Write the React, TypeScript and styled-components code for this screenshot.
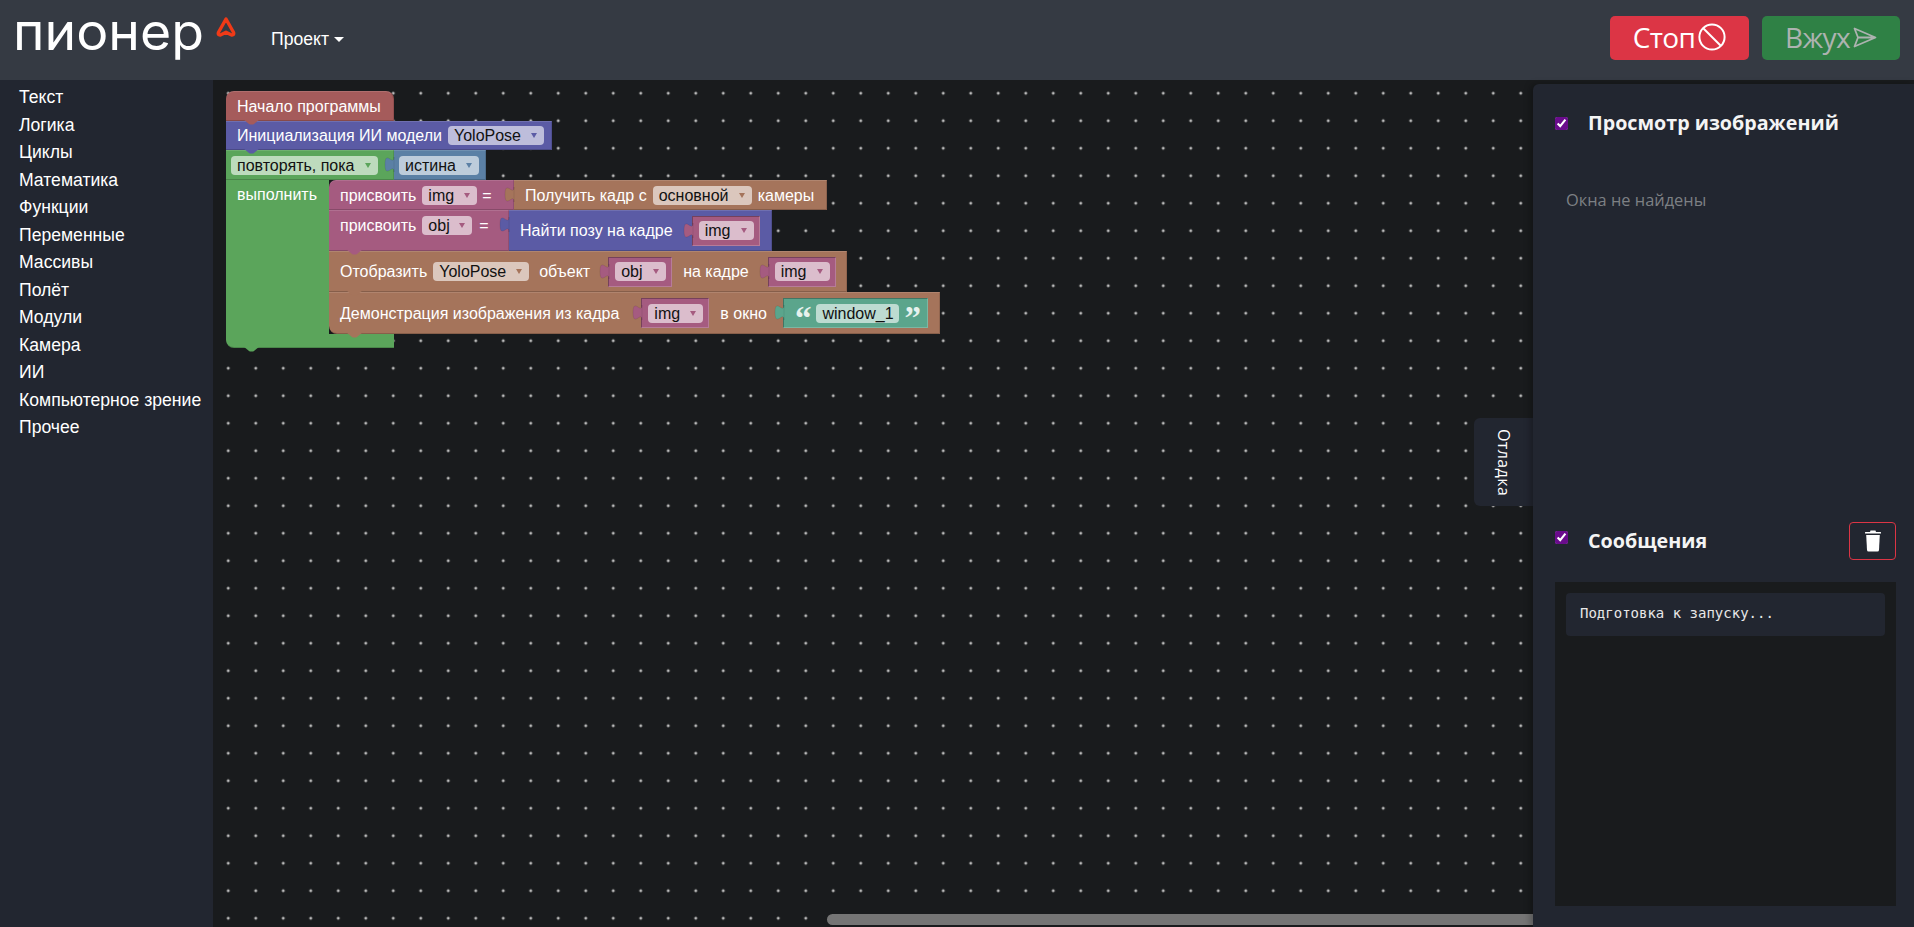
import React from "react";
import styled, { createGlobalStyle } from "styled-components";

const Global = createGlobalStyle`
  html, body { margin: 0; height: 100%; overflow: hidden; background: #191b1d; }
  #root { height: 100%; }
  * { box-sizing: border-box; }
`;

const C = {
  red: "#a55b5b",
  indigo: "#5b5ba5",
  green: "#5ba55b",
  blue: "#5b80a5",
  pink: "#a55b80",
  brown: "#a5745b",
  teal: "#5ba58c",
};
const FIELD: Record<string, string> = {
  indigo: "#bdbddb",
  green: "#bddbbd",
  blue: "#bdccdb",
  pink: "#dbbdcc",
  brown: "#dbc7bd",
  teal: "#bddbd1",
};
type Hue = keyof typeof C;

const Page = styled.div`
  height: 100%;
  display: flex;
  flex-direction: column;
`;
const Navbar = styled.header`
  flex: 0 0 80px;
  background: #353a43;
  display: flex;
  align-items: flex-start;
  padding: 16px 14px 0 16px;
`;
const LogoWrap = styled.div`
  display: flex;
  width: 255px;
  flex: none;
`;
const LogoText = styled.span`
  font: 400 51px/1 "Inter", sans-serif;
  color: #fff;
  margin: -10px 0 0 -3px;
  height: 51px;
  transform: scaleX(1.05);
  transform-origin: left center;
`;
const LogoMark = styled.svg`
  margin: 0 0 0 21px;
`;
const NavMenu = styled.button`
  border: 0;
  background: none;
  padding: 0;
  margin: 14px 0 0 0;
  color: #fff;
  font: 17.6px/18px "Liberation Sans", sans-serif;
  display: flex;
  align-items: center;
  gap: 5px;
`;
const Caret = styled.i`
  width: 0;
  height: 0;
  border: 5px solid transparent;
  border-top-color: #fff;
  border-bottom: 0;
`;
const NavActions = styled.div`
  margin-left: auto;
  display: flex;
  gap: 13px;
`;
const ActionButton = styled.button<{ $tone: "stop" | "go" }>`
  width: ${(p) => (p.$tone === "stop" ? 139 : 138)}px;
  height: 44px;
  border: 0;
  border-radius: 5px;
  background: ${(p) => (p.$tone === "stop" ? "#dc3545" : "#2f8145")};
  color: ${(p) => (p.$tone === "stop" ? "#fff" : "#adb3b0")};
  font: 28px/1 "Open Sans", sans-serif;
  letter-spacing: -0.6px;
  display: flex;
  align-items: center;
  justify-content: center;
  gap: 3px;
  padding: 0 0 2px;
`;
const Main = styled.main`
  flex: 1;
  min-height: 0;
  display: flex;
`;
const Sidebar = styled.ul`
  flex: 0 0 214px;
  margin: 0;
  padding: 4px 0 0 19px;
  list-style: none;
  background: #222630;
  border-right: 1px solid #191b1d;
`;
const SideItem = styled.li`
  font: 17.6px/27.5px "Liberation Sans", sans-serif;
  color: #fff;
`;
const Workspace = styled.section`
  flex: 1;
  position: relative;
  overflow: hidden;
  background-color: #191b1d;
  background-image: radial-gradient(circle, #c4c4c4 0, #b8b8b8 1.1px, transparent 1.8px);
  background-size: 27.5px 27.5px;
  background-position: 0.5px -0.5px;
`;
const Scroll = styled.div`
  position: absolute;
  left: 613px;
  right: 0;
  bottom: 2px;
  height: 11px;
  background: #757575;
  border-radius: 6px 0 0 6px;
`;
const DebugTab = styled.div`
  position: absolute;
  right: 0;
  top: 338px;
  width: 59px;
  height: 88px;
  padding-top: 2px;
  background: #222630;
  border-radius: 6px 0 0 6px;
  display: flex;
  align-items: center;
  justify-content: center;
  writing-mode: vertical-rl;
  color: #fff;
  font: 16px "Open Sans", sans-serif;
  letter-spacing: 0.4px;
`;

/* Blockly program */
const Program = styled.div`
  position: absolute;
  left: 12px;
  top: 11px;
  display: flex;
  flex-direction: column;
  align-items: flex-start;
  font: 16px/19px "Liberation Sans", sans-serif;
  color: #fff;
`;
const Stmt = styled.div<{ $hue: Hue; $h?: number; $w?: number; $pl?: number; $hat?: boolean; $corner?: "top" | "bottom"; $high?: boolean }>`
  position: relative;
  display: flex;
  align-items: ${(p) => (p.$high ? "flex-start" : "center")};
  height: ${(p) => p.$h ?? 30}px;
  ${(p) => (p.$w ? `width: ${p.$w}px;` : "")}
  padding: ${(p) => (p.$high ? 5 : 0)}px 0 0 ${(p) => p.$pl ?? 11}px;
  background: ${(p) => C[p.$hue]};
  border-top: 1px solid rgba(255, 255, 255, 0.12);
  border-right: 1px solid rgba(0, 0, 0, 0.12);
  border-bottom: 1px solid rgba(0, 0, 0, 0.18);
  ${(p) => (p.$hat ? "border-radius: 8px 8px 0 0;" : "")}
  ${(p) => (p.$corner === "top" ? "border-radius: 7px 0 0 0;" : "")}
  ${(p) => (p.$corner === "bottom" ? "border-radius: 0 0 0 8px;" : "")}
`;
const ValueRow = styled.div`
  display: flex;
  align-items: flex-start;
`;
const Value = styled.div<{ $hue: Hue; $h?: number; $w?: number; $pl?: number }>`
  position: relative;
  flex: none;
  display: flex;
  align-items: center;
  height: ${(p) => p.$h ?? 30}px;
  ${(p) => (p.$w ? `width: ${p.$w}px;` : "")}
  padding: 0 0 0 ${(p) => p.$pl ?? 6}px;
  background: ${(p) => C[p.$hue]};
  border-top: 1px solid rgba(255, 255, 255, 0.12);
  border-right: 1px solid rgba(0, 0, 0, 0.14);
  border-bottom: 1px solid rgba(0, 0, 0, 0.18);
`;
const Inline = styled(Value)<{ $l?: number }>`
  margin-left: ${(p) => p.$l ?? 0}px;
  border: 1px solid rgba(0, 0, 0, 0.28);
  border-right-color: rgba(255, 255, 255, 0.2);
  border-bottom-color: rgba(255, 255, 255, 0.2);
`;
const TabSvg = styled.svg`
  position: absolute;
  left: -9px;
  top: 6px;
  overflow: visible;
`;
const NotchSvg = styled.svg`
  position: absolute;
  left: 17px;
  top: 100%;
  z-index: 3;
  overflow: visible;
`;
const Label = styled.span<{ $l?: number }>`
  flex: none;
  white-space: pre;
  margin-left: ${(p) => p.$l ?? 0}px;
`;
const Field = styled.span<{ $hue: string; $w: number; $l?: number }>`
  flex: none;
  width: ${(p) => p.$w}px;
  height: 19px;
  margin-left: ${(p) => p.$l ?? 0}px;
  padding: 0 7px 0 6px;
  border-radius: 4px;
  background: ${(p) => FIELD[p.$hue]};
  color: #111;
  display: flex;
  align-items: center;
  justify-content: space-between;
`;
const Arrow = styled.i<{ $hue: Hue }>`
  width: 0;
  height: 0;
  border: 3.5px solid transparent;
  border-top: 5px solid ${(p) => C[p.$hue]};
  border-bottom: 0;
`;
const Quote = styled.span<{ $l: number; $r: number }>`
  font: bold 33px/1 "Liberation Serif", serif;
  height: 19px;
  margin-top: -3px;
  margin-left: ${(p) => p.$l}px;
  margin-right: ${(p) => p.$r}px;
  color: #e6f2ee;
`;
const StringBlock = styled(Inline)`
  padding-left: 0;
`;
const Loop = styled.div`
  display: flex;
  flex-direction: column;
  align-items: flex-start;
`;
const LoopBody = styled.div`
  display: flex;
  align-items: stretch;
`;
const LoopSide = styled.div`
  width: 103px;
  flex: none;
  background: ${C.green};
  padding: 5px 0 0 11px;
`;
const InnerStack = styled.div`
  display: flex;
  flex-direction: column;
  align-items: flex-start;
  position: relative;
  background: linear-gradient(to right, #15171a 0, #15171a 12px, transparent 12px) bottom left / 100% 10px no-repeat;
`;
const LoopFoot = styled.div`
  position: relative;
  width: 168px;
  height: 14px;
  background: ${C.green};
  border-radius: 0 0 0 8px;
  border-bottom: 1px solid rgba(0, 0, 0, 0.18);
`;

const Tab = ({ hue }: { hue: Hue }) => (
  <TabSvg width="9" height="15" viewBox="0 0 8 15" preserveAspectRatio="none">
    <path d="M8,0 c0,10 -8,-8 -8,7.5 s8,-2.5 8,7.5 Z" fill={C[hue]} stroke="rgba(0,0,0,.15)" strokeWidth="0.5" />
  </TabSvg>
);
const Notch = ({ hue }: { hue: Hue }) => (
  <NotchSvg width="17" height="5" viewBox="0 0 17 5">
    <path d="M0,-1 L6,4 Q6.8,4.6 8,4.6 H9 Q10.2,4.6 11,4 L17,-1 Z" fill={C[hue]} />
  </NotchSvg>
);
const Drop = ({ hue, w, l, children }: { hue: Hue; w: number; l?: number; children: React.ReactNode }) => (
  <Field $hue={hue} $w={w} $l={l}>
    <span>{children}</span>
    <Arrow $hue={hue} />
  </Field>
);
const ImgVar = ({ w, l, children }: { w: number; l: number; children: string }) => (
  <Inline $hue="pink" $w={w} $l={l}>
    <Tab hue="pink" />
    <Drop hue="pink" w={w - 13}>{children}</Drop>
  </Inline>
);

const Panel = styled.aside`
  flex: 0 0 381px;
  margin-top: 4px;
  position: relative;
  background: #222630;
  border-top-left-radius: 6px;
  box-shadow: -3px 0 6px rgba(0, 0, 0, 0.25);
  display: flex;
  flex-direction: column;
  color: #f4f4f4;
`;
const Viewer = styled.div`
  flex: 1;
  padding: 20px 18px 0 22px;
`;
const PanelHead = styled.div`
  display: flex;
  align-items: center;
  height: 38px;
`;
const Check = styled.input<{ $lift?: number }>`
  width: 13px;
  height: 13px;
  margin: 0 20px ${(p) => p.$lift ?? 0}px 0;
  accent-color: #6a0c8c;
  flex: none;
`;
const Title = styled.h2`
  margin: 0;
  font: 700 19.7px/38px "Open Sans", sans-serif;
  color: #f4f4f4;
`;
const Empty = styled.p`
  margin: 48px 0 0 11px;
  font: 16.4px/20px "Open Sans", sans-serif;
  color: #7d8084;
`;
const LogSection = styled.div`
  flex: 0 0 405px;
  padding: 0 18px 21px 22px;
  display: flex;
  flex-direction: column;
`;
const TrashBtn = styled.button`
  margin-left: auto;
  width: 47px;
  height: 38px;
  border: 1px solid #dc3545;
  border-radius: 4px;
  background: none;
  padding: 0;
  display: flex;
  align-items: center;
  justify-content: center;
`;
const Console = styled.div`
  flex: 1;
  margin-top: 22px;
  padding: 11px;
  background: #191b1d;
`;
const LogLine = styled.div`
  height: 43px;
  padding: 0 14px;
  border-radius: 4px;
  background: #222630;
  color: #e8e8e8;
  font: 14px/40px "DejaVu Sans Mono", monospace;
`;

const categories = ["Текст","Логика","Циклы","Математика","Функции","Переменные","Массивы","Полёт","Модули","Камера","ИИ","Компьютерное зрение","Прочее"];

export default function App() {
  return (
    <Page>
      <Global />
      <Navbar>
        <LogoWrap>
          <LogoText>пионер</LogoText>
          <LogoMark width="20" height="22" viewBox="0 0 20 22">
            <path d="M10 3 L17.6 16.5 Q18.4 19.3 15.6 19 L10 16.2 L4.4 19 Q1.6 19.3 2.4 16.5 Z" fill="none" stroke="#f03a17" strokeWidth="3.4" strokeLinejoin="round" />
          </LogoMark>
        </LogoWrap>
        <NavMenu>Проект<Caret /></NavMenu>
        <NavActions>
          <ActionButton $tone="stop">
            Стоп
            <svg width="28" height="28" viewBox="0 0 28 28" fill="none" stroke="#fff" strokeWidth="2">
              <circle cx="14" cy="14" r="12.6" />
              <path d="M5 5 L23 23" />
            </svg>
          </ActionButton>
          <ActionButton $tone="go">
            Вжух
            <svg width="24" height="21" viewBox="0 0 24 21" fill="none" stroke="#adb3b0" strokeWidth="1.8" strokeLinejoin="round">
              <path d="M1.5 1.5 L22.5 10.5 L1.5 19.5 L5 10.5 Z M5 10.5 H22" />
            </svg>
          </ActionButton>
        </NavActions>
      </Navbar>
      <Main>
        <Sidebar>
          {categories.map((c) => <SideItem key={c}>{c}</SideItem>)}
        </Sidebar>
        <Workspace>
          <Program>
            <Stmt $hue="red" $w={168} $hat><Label>Начало программы</Label><Notch hue="red" /></Stmt>
            <Stmt $hue="indigo" $h={29} $w={326}>
              <Label>Инициализация ИИ модели</Label>
              <Drop hue="indigo" w={96} l={6}>YoloPose</Drop>
              <Notch hue="indigo" />
            </Stmt>
            <Loop>
              <ValueRow>
                <Stmt $hue="green" $w={168} $pl={5}>
                  <Drop hue="green" w={147}>повторять, пока</Drop>
                </Stmt>
                <Value $hue="blue" $w={92} $pl={5}>
                  <Tab hue="blue" />
                  <Drop hue="blue" w={80}>истина</Drop>
                </Value>
              </ValueRow>
              <LoopBody>
                <LoopSide>выполнить</LoopSide>
                <InnerStack>
                  <ValueRow>
                    <Stmt $hue="pink" $w={185} $corner="top">
                      <Label>присвоить</Label>
                      <Drop hue="pink" w={55} l={6}>img</Drop>
                      <Label $l={5}>=</Label>
                    </Stmt>
                    <Value $hue="brown" $w={313} $pl={11}>
                      <Tab hue="brown" />
                      <Label>Получить кадр с</Label>
                      <Drop hue="brown" w={99} l={6}>основной</Drop>
                      <Label $l={6}>камеры</Label>
                    </Value>
                  </ValueRow>
                  <ValueRow>
                    <Stmt $hue="pink" $h={41} $w={180} $high>
                      <Label>присвоить</Label>
                      <Drop hue="pink" w={50} l={6}>obj</Drop>
                      <Label $l={7}>=</Label>
                      <Notch hue="pink" />
                    </Stmt>
                    <Value $hue="indigo" $h={41} $w={263} $pl={11}>
                      <Tab hue="indigo" />
                      <Label>Найти позу на кадре</Label>
                      <ImgVar w={68} l={19}>img</ImgVar>
                    </Value>
                  </ValueRow>
                  <Stmt $hue="brown" $h={41} $w={518}>
                    <Label>Отобразить</Label>
                    <Drop hue="brown" w={96} l={6}>YoloPose</Drop>
                    <Label $l={10}>объект</Label>
                    <ImgVar w={64} l={18}>obj</ImgVar>
                    <Label $l={11}>на кадре</Label>
                    <ImgVar w={68} l={19}>img</ImgVar>
                    <Notch hue="brown" />
                  </Stmt>
                  <Stmt $hue="brown" $h={42} $w={611} $corner="bottom">
                    <Label>Демонстрация изображения из кадра</Label>
                    <ImgVar w={68} l={22}>img</ImgVar>
                    <Label $l={11}>в окно</Label>
                    <StringBlock $hue="teal" $w={145} $l={16}>
                      <Tab hue="teal" />
                      <Quote $l={11} $r={5}>“</Quote>
                      <Field $hue="teal" $w={83}><span>window_1</span></Field>
                      <Quote $l={5} $r={0}>”</Quote>
                    </StringBlock>
                    <Notch hue="brown" />
                  </Stmt>
                </InnerStack>
              </LoopBody>
              <LoopFoot><Notch hue="green" /></LoopFoot>
            </Loop>
          </Program>
          <DebugTab>Отладка</DebugTab>
          <Scroll />
        </Workspace>
        <Panel>
          <Viewer>
            <PanelHead>
              <Check type="checkbox" defaultChecked />
              <Title>Просмотр изображений</Title>
            </PanelHead>
            <Empty>Окна не найдены</Empty>
          </Viewer>
          <LogSection>
            <PanelHead>
              <Check type="checkbox" defaultChecked $lift={7} />
              <Title>Сообщения</Title>
              <TrashBtn aria-label="Очистить">
                <svg width="16" height="22" viewBox="0 0 16 22" fill="#fff">
                  <path d="M5.5 0.5 H10.5 L11 2 H15.5 Q16 2 16 2.6 V3.6 H0 V2.6 Q0 2 0.5 2 H5 Z" />
                  <path d="M1.2 5 H14.8 L14 20 Q13.9 21.5 12.4 21.5 H3.6 Q2.1 21.5 2 20 Z" />
                </svg>
              </TrashBtn>
            </PanelHead>
            <Console>
              <LogLine>Подготовка к запуску...</LogLine>
            </Console>
          </LogSection>
        </Panel>
      </Main>
    </Page>
  );
}
